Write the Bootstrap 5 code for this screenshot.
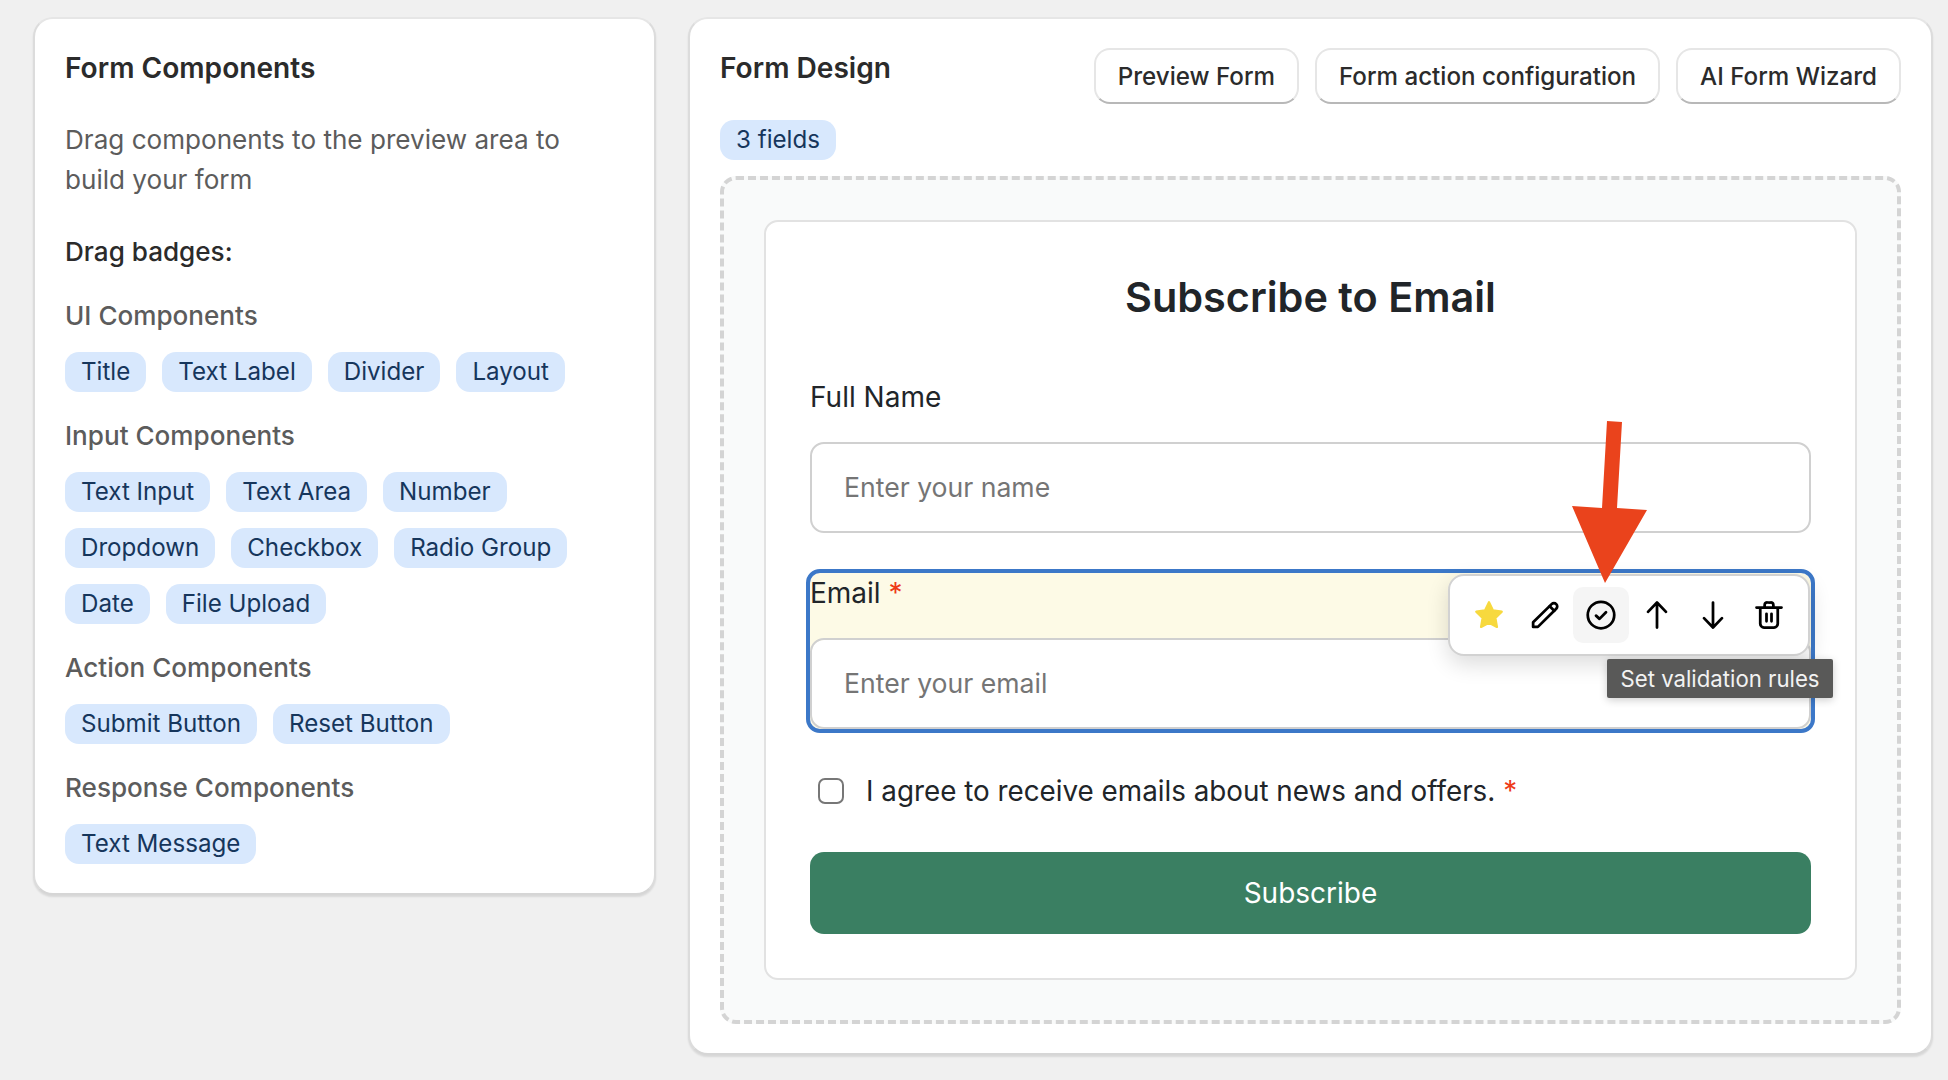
<!doctype html>
<html lang="en">
<head>
<meta charset="utf-8">
<title>Form Design</title>
<link rel="stylesheet" href="https://cdn.jsdelivr.net/npm/bootstrap@5.3.0/dist/css/bootstrap.min.css">
<style>
body{background:#f0f0f0;font-family:Inter,"Noto Sans",sans-serif;font-size:26.1px;line-height:40px;color:#212529}
.fb-page{padding:17px 15px 25px 33px;gap:32px;min-height:1080px}
.fb-panel{border:2px solid #dcdcdc;border-top-color:#e6e6e6;border-bottom-color:#d6d6d6;border-radius:20px;box-shadow:0 2px 2px rgba(0,0,0,.1);background:#fff;--bs-card-bg:#fff}
.fb-left{width:623px;flex:none}
.fb-panel .card-body{padding:29px 30px}
.fb-title{font-size:28.1px;line-height:40px;font-weight:600;color:#2b2b2b;margin:0}
.fb-desc{color:#5c5c5c;margin:32px 0 0}
.fb-sub{font-weight:500;color:#2b2b2b;margin:32px 0 0}
.fb-group{font-weight:500;color:#5c5c5c;margin:24px 0 16px}
.fb-chip{background:#d8e8fd;color:#16365c;font-size:24.15px;line-height:40px;height:40px;padding:0 16px;border-radius:14px;font-weight:400;display:inline-block;white-space:nowrap}
.fb-btn{font-size:24.15px;font-weight:500;line-height:40px;color:#2b2b2b;background:#fff;border:2px solid #e6e6e6;border-bottom-color:#b8b8b8;border-radius:16px;padding:7px 22px 5px;height:56px}
.fb-btnrow{gap:16px}
.fb-chiprow{margin-top:16px}
.fb-canvas{border:4px dashed #d4d4d4;border-radius:16px;background:#f9fafa;padding:40px;margin-top:16px}
.fb-form{border:2px solid #e2e2e2;border-radius:14px;background:#fff;padding:35px 44px 44px}
.fb-h{font-size:41.4px;line-height:52px;font-weight:600;text-align:center;margin:14px 0 54px;color:#212529}
.fb-label{font-size:28px;font-weight:400;display:block;margin:0 0 25px;line-height:40px}
.fb-input{height:91px;border:2px solid #d0d0d0;border-radius:14px;padding:0 32px 2px;font-size:26.6px;color:#212529}
.fb-input::placeholder{color:#757575}
.fb-field{margin-bottom:40px}
.fb-sel{position:relative;background:#fdfae6;outline:4px solid #3c78c8;border-radius:10px;margin-bottom:0}
.fb-req{color:#ee3a17}
.fb-check{gap:22px;padding:0 8px;margin-top:42px;font-size:27.8px}
.fb-box{width:26px;height:26px;border:2px solid #777;border-radius:5px;margin:0;float:none;flex:none;background-color:#fff}
.fb-submit{display:block;width:100%;height:82px;background:#3a7f62;border:0;color:#fff;font-size:28px;border-radius:14px;margin-top:41px}
.fb-tools{position:absolute;right:1px;top:1px;background:#fff;border:2px solid #d2d2d2;border-radius:16px;padding:11px;box-shadow:0 8px 22px rgba(0,0,0,.14)}
.fb-tool{width:56px;height:56px;border-radius:10px;display:flex;align-items:center;justify-content:center}
.fb-tool.fb-on{background:#f5f5f5}
.fb-tool svg{fill:none;stroke:#000;stroke-width:2.2;stroke-linecap:round;stroke-linejoin:round}
.fb-tool svg.fb-star{fill:#f7d93e;stroke:#f7d93e;stroke-width:1.6}
.fb-tip{position:absolute;left:797px;top:86px;width:226px;height:39px;background:#595958;color:#f2f2f2;font-size:22.2px;line-height:39px;text-align:center;border-radius:2px;box-shadow:0 2px 8px rgba(0,0,0,.2);white-space:nowrap}
.fb-arrow{position:absolute;left:752px;top:-152px;pointer-events:none}
</style>
</head>
<body>
<div class="d-flex align-items-start fb-page">
  <div class="card fb-panel fb-left">
    <div class="card-body">
      <h5 class="fb-title">Form Components</h5>
      <p class="fb-desc">Drag components to the preview area to build your form</p>
      <div class="fb-sub">Drag badges:</div>
      <div class="fb-group">UI Components</div>
      <div class="d-flex flex-wrap gap-3"><span class="fb-chip">Title</span><span class="fb-chip">Text Label</span><span class="fb-chip">Divider</span><span class="fb-chip">Layout</span></div>
      <div class="fb-group">Input Components</div>
      <div class="d-flex flex-wrap gap-3"><span class="fb-chip">Text Input</span><span class="fb-chip">Text Area</span><span class="fb-chip">Number</span><span class="fb-chip">Dropdown</span><span class="fb-chip">Checkbox</span><span class="fb-chip">Radio Group</span><span class="fb-chip">Date</span><span class="fb-chip">File Upload</span></div>
      <div class="fb-group">Action Components</div>
      <div class="d-flex flex-wrap gap-3"><span class="fb-chip">Submit Button</span><span class="fb-chip">Reset Button</span></div>
      <div class="fb-group">Response Components</div>
      <div class="d-flex flex-wrap gap-3"><span class="fb-chip">Text Message</span></div>
    </div>
  </div>
  <div class="card fb-panel fb-right flex-fill">
    <div class="card-body">
      <div class="d-flex justify-content-between align-items-start">
        <h5 class="fb-title">Form Design</h5>
        <div class="d-flex fb-btnrow">
          <button type="button" class="btn fb-btn">Preview Form</button>
          <button type="button" class="btn fb-btn">Form action configuration</button>
          <button type="button" class="btn fb-btn">AI Form Wizard</button>
        </div>
      </div>
      <div class="d-flex fb-chiprow"><span class="fb-chip">3 fields</span></div>
      <div class="fb-canvas">
        <div class="fb-form">
          <h2 class="fb-h">Subscribe to Email</h2>
          <div class="fb-field">
            <label class="fb-label">Full Name</label>
            <input class="form-control fb-input" type="text" placeholder="Enter your name">
          </div>
          <div class="fb-sel">
            <label class="fb-label">Email <span class="fb-req">*</span></label>
            <input class="form-control fb-input" type="email" placeholder="Enter your email">
            <div class="d-flex fb-tools">
              <div class="fb-tool"><svg class="fb-star" width="34" height="34" viewBox="0 0 24 24"><path d="M12 3l2.8 5.8 6.2.9-4.5 4.4 1.1 6.3L12 17.4l-5.6 3 1.1-6.3L3 9.7l6.2-.9z"/></svg></div>
              <div class="fb-tool"><svg width="30" height="30" viewBox="0 0 24 24"><path d="M2.5 21.5h3.8L21 7a2.6 2.6 0 0 0-3.7-3.7L2.5 17.8z"/><path d="M15.8 5l3.6 3.6"/></svg></div>
              <div class="fb-tool fb-on"><svg width="30" height="30" viewBox="0 0 24 24"><circle cx="12" cy="12" r="10.6"/><path d="M8 12.5l2.8 2.6L16 9.8"/></svg></div>
              <div class="fb-tool"><svg width="30" height="30" viewBox="0 0 24 24"><path d="M12 22V2M4.8 9.5L12 2l7.2 7.5"/></svg></div>
              <div class="fb-tool"><svg width="30" height="30" viewBox="0 0 24 24"><path d="M12 2v20M4.8 14.5L12 22l7.2-7.5"/></svg></div>
              <div class="fb-tool"><svg width="30" height="30" viewBox="0 0 24 24"><path d="M2 6h20M8.5 5.5V4a2.2 2.2 0 0 1 2.2-2h2.6a2.2 2.2 0 0 1 2.2 2v1.5M5 6v13a3 3 0 0 0 3 3h8a3 3 0 0 0 3-3V6M10 11v6M14 11v6"/></svg></div>
            </div>
            <div class="fb-tip">Set validation rules</div>
            <svg class="fb-arrow" width="90" height="170" viewBox="0 0 90 170"><polygon points="45,0 60,1 55,87 85,89 43,162 10,85 40,87" fill="#ea431c"/></svg>
          </div>
          <div class="d-flex align-items-center fb-check">
            <input class="form-check-input fb-box" type="checkbox">
            <span>I agree to receive emails about news and offers. <span class="fb-req">*</span></span>
          </div>
          <button type="button" class="btn fb-submit">Subscribe</button>
        </div>
      </div>
    </div>
  </div>
</div>
<script src="https://cdn.jsdelivr.net/npm/bootstrap@5.3.0/dist/js/bootstrap.bundle.min.js"></script>
</body>
</html>
